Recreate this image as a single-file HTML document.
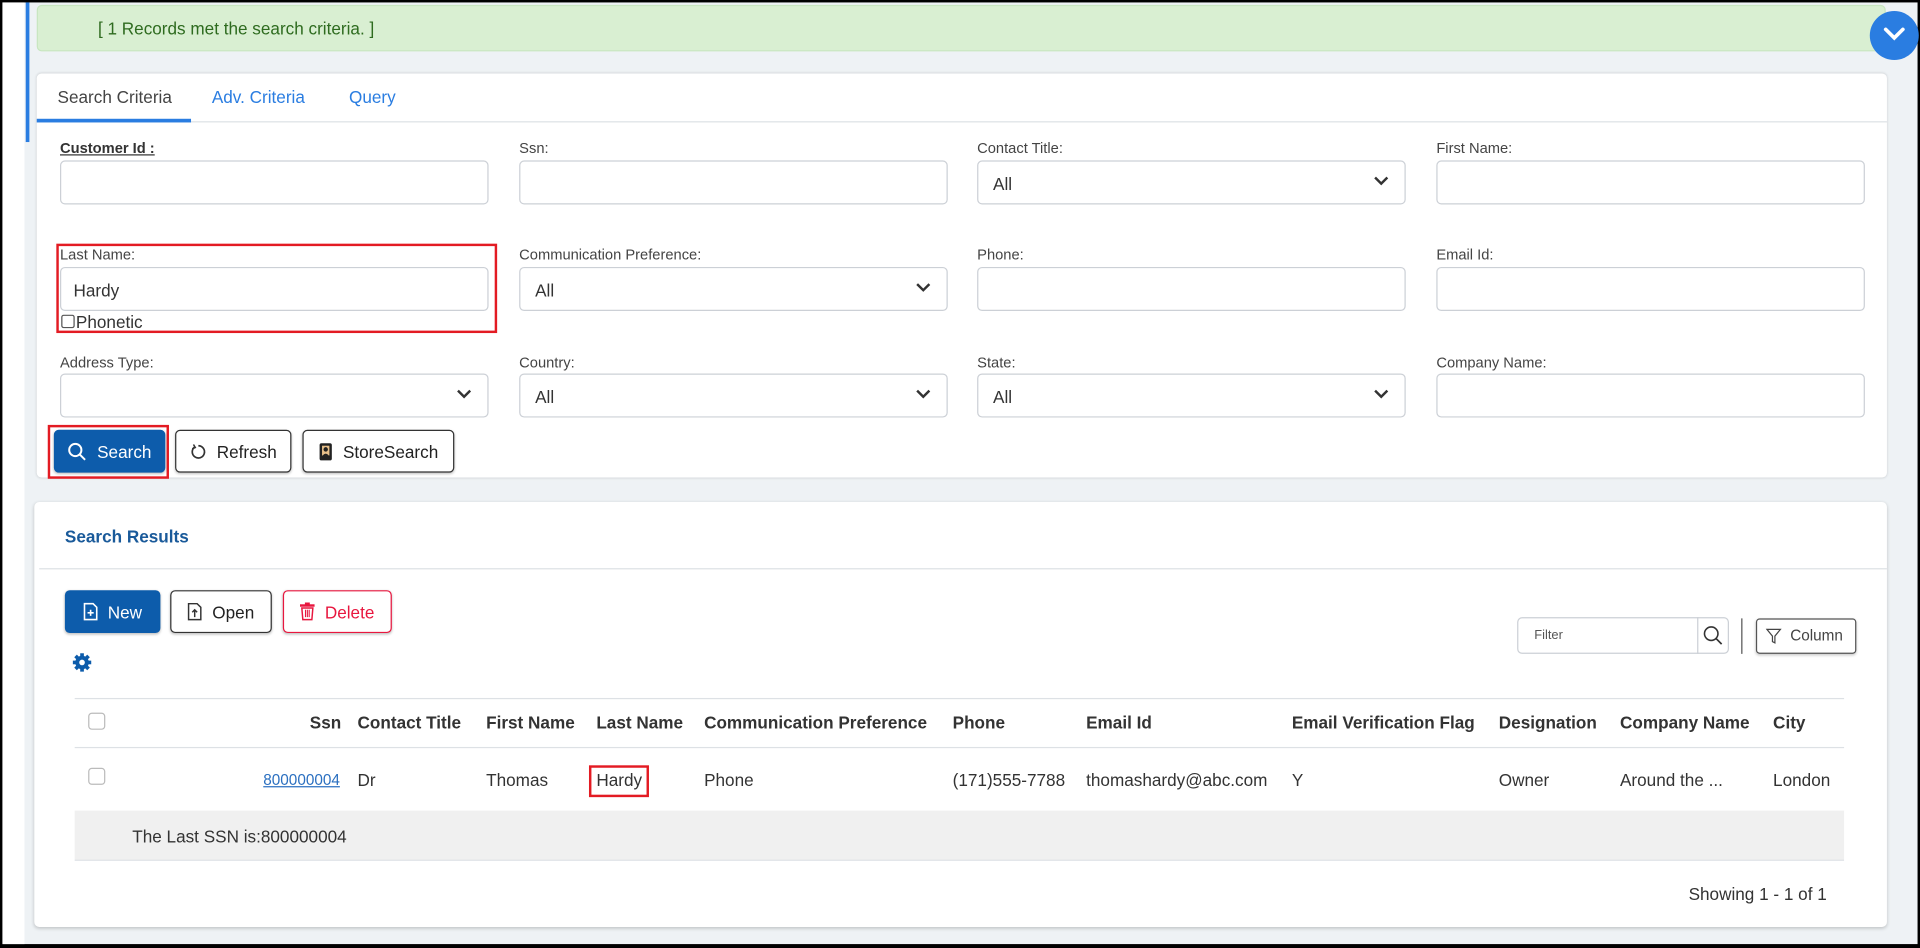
<!DOCTYPE html>
<html><head><meta charset="utf-8">
<style>
*{box-sizing:border-box;margin:0;padding:0}
html,body{width:1920px;height:948px;overflow:hidden;background:#000}
#w{position:absolute;left:0;top:0;width:1568px;height:774px;transform:scale(1.22449);transform-origin:0 0;background:#000;font-family:"Liberation Sans",sans-serif;color:#333}
.a{position:absolute;white-space:nowrap}
.lbl{font-size:12px;color:#444}
.inp{position:absolute;height:36px;width:350px;border:1px solid #ccd0d6;border-radius:4px;background:#fff;font-size:14px;color:#333;padding:10px 12px}
.chev{position:absolute;right:12px;top:11px}
.btn{position:absolute;height:35px;border:1px solid #333;border-radius:4px;background:#fff;font-size:14px;color:#222;display:flex;align-items:center;justify-content:center;gap:8px;box-shadow:0 1px 2px rgba(0,0,0,.25)}
.th{position:absolute;top:582px;font-size:14px;font-weight:bold;color:#333}
.td{position:absolute;top:629px;font-size:14px;color:#333}
</style></head><body><div id="w">
<div class="a" style="left:2px;top:2px;width:1564px;height:769px;background:#eef2f5"></div>
<div class="a" style="left:2px;top:2px;width:18px;height:769px;background:#fff"></div>
<div class="a" style="left:21px;top:2px;width:3px;height:114px;background:#2a7de1"></div>
<!-- banner -->
<div class="a" style="left:30px;top:4px;width:1510px;height:38px;background:#d9efd2;border:1px solid #c8e6c0;border-radius:4px"></div>
<div class="a" style="left:80px;top:15px;font-size:14px;color:#2e6b1f">[ 1 Records met the search criteria. ]</div>
<div class="a" style="left:1527px;top:9px;width:40px;height:40px;border-radius:50%;background:#2a7de1"></div>
<svg class="a" style="left:1538px;top:21px" width="18" height="14" viewBox="0 0 18 14"><path d="M2 3 L9 10 L16 3" stroke="#fff" stroke-width="3" fill="none" stroke-linecap="round"/></svg>
<!-- card 1 -->
<div class="a" style="left:30px;top:60px;width:1511px;height:330px;background:#fff;border-radius:4px;box-shadow:0 0 2px rgba(0,0,0,.15)"></div>
<div class="a" style="left:30px;top:99px;width:1511px;height:1px;background:#dde1e5"></div>
<div class="a" style="left:30px;top:97px;width:126px;height:3px;background:#2a7de1"></div>
<div class="a" style="left:47px;top:71px;font-size:14px;color:#444">Search Criteria</div>
<div class="a" style="left:173px;top:71px;font-size:14px;color:#2a7de1">Adv. Criteria</div>
<div class="a" style="left:285px;top:71px;font-size:14px;color:#2a7de1">Query</div>

<div class="a lbl" style="left:49px;top:114px;font-weight:bold;text-decoration:underline;color:#333">Customer Id :</div>
<div class="inp" style="left:49px;top:131px"></div>
<div class="a lbl" style="left:424px;top:114px">Ssn:</div>
<div class="inp" style="left:424px;top:131px"></div>
<div class="a lbl" style="left:798px;top:114px">Contact Title:</div>
<div class="inp" style="left:798px;top:131px">All<svg class="chev" width="14" height="10"><path d="M2 2 L7 7 L12 2" stroke="#333" stroke-width="2" fill="none"/></svg></div>
<div class="a lbl" style="left:1173px;top:114px">First Name:</div>
<div class="inp" style="left:1173px;top:131px"></div>

<div class="a lbl" style="left:49px;top:201px">Last Name:</div>
<div class="inp" style="left:49px;top:218px;padding-left:10px">Hardy</div>
<div class="a" style="left:50px;top:257px;width:11px;height:11px;border:1px solid #555;border-radius:2px;background:#fff"></div>
<div class="a" style="left:62px;top:255px;font-size:14px;color:#333">Phonetic</div>
<div class="a" style="left:46px;top:199px;width:360px;height:73px;border:2px solid #e31b23"></div>
<div class="a lbl" style="left:424px;top:201px">Communication Preference:</div>
<div class="inp" style="left:424px;top:218px">All<svg class="chev" width="14" height="10"><path d="M2 2 L7 7 L12 2" stroke="#333" stroke-width="2" fill="none"/></svg></div>
<div class="a lbl" style="left:798px;top:201px">Phone:</div>
<div class="inp" style="left:798px;top:218px"></div>
<div class="a lbl" style="left:1173px;top:201px">Email Id:</div>
<div class="inp" style="left:1173px;top:218px"></div>

<div class="a lbl" style="left:49px;top:289px">Address Type:</div>
<div class="inp" style="left:49px;top:305px"><svg class="chev" width="14" height="10"><path d="M2 2 L7 7 L12 2" stroke="#333" stroke-width="2" fill="none"/></svg></div>
<div class="a lbl" style="left:424px;top:289px">Country:</div>
<div class="inp" style="left:424px;top:305px">All<svg class="chev" width="14" height="10"><path d="M2 2 L7 7 L12 2" stroke="#333" stroke-width="2" fill="none"/></svg></div>
<div class="a lbl" style="left:798px;top:289px">State:</div>
<div class="inp" style="left:798px;top:305px">All<svg class="chev" width="14" height="10"><path d="M2 2 L7 7 L12 2" stroke="#333" stroke-width="2" fill="none"/></svg></div>
<div class="a lbl" style="left:1173px;top:289px">Company Name:</div>
<div class="inp" style="left:1173px;top:305px"></div>

<div class="a" style="left:39px;top:347px;width:99px;height:44px;border:2px solid #e31b23"></div>
<div class="btn" style="left:44px;top:351px;width:91px;background:#0d5cab;border-color:#0d5cab;color:#fff"><svg width="16" height="16"><circle cx="6.5" cy="6.5" r="5" stroke="#fff" stroke-width="1.6" fill="none"/><path d="M10 10 L14.5 14.5" stroke="#fff" stroke-width="1.6"/></svg>Search</div>
<div class="btn" style="left:143px;top:351px;width:95px"><svg width="14" height="14"><path d="M4 3 A5 5 0 1 0 7 2" stroke="#333" stroke-width="1.4" fill="none"/><path d="M3 1 L4.5 3.5 L2 4.5" stroke="#333" stroke-width="1.2" fill="none"/></svg>Refresh</div>
<div class="btn" style="left:247px;top:351px;width:124px"><svg width="12" height="16"><rect x="1" y="1" width="10" height="14" rx="1.5" fill="#222"/><rect x="3" y="3" width="6" height="8" fill="#e8c08a"/><circle cx="6" cy="6" r="1.8" fill="#222"/><path d="M3.5 11 Q6 8 8.5 11Z" fill="#222"/></svg>StoreSearch</div>

<!-- card 2 -->
<div class="a" style="left:28px;top:410px;width:1513px;height:347px;background:#fff;border-radius:4px;box-shadow:0 1px 3px rgba(0,0,0,.2)"></div>
<div class="a" style="left:53px;top:430px;font-size:14px;font-weight:bold;color:#1a5a9a">Search Results</div>
<div class="a" style="left:32px;top:464px;width:1509px;height:1px;background:#dde1e5"></div>
<div class="btn" style="left:53px;top:482px;width:78px;background:#0d5cab;border-color:#0d5cab;color:#fff"><svg width="12" height="15"><path d="M1 1 H8 L11 4 V14 H1Z" stroke="#fff" stroke-width="1.3" fill="none"/><path d="M6 6 V11 M3.5 8.5 H8.5" stroke="#fff" stroke-width="1.3"/></svg>New</div>
<div class="btn" style="left:139px;top:482px;width:83px"><svg width="12" height="15"><path d="M1 1 H8 L11 4 V14 H1Z" stroke="#333" stroke-width="1.2" fill="none"/><path d="M6 12 V6 M4 8 L6 6 L8 8" stroke="#333" stroke-width="1.2" fill="none"/></svg>Open</div>
<div class="btn" style="left:231px;top:482px;width:89px;border-color:#e8173f;color:#e8173f"><svg width="12" height="15"><rect x="0" y="1.5" width="12" height="2" fill="#e8173f"/><rect x="4" y="0" width="4" height="2" fill="#e8173f"/><path d="M1.5 4.5 H10.5 L9.7 14 H2.3Z" stroke="#e8173f" stroke-width="1.2" fill="none"/><path d="M4.5 6 V12 M6 6 V12 M7.5 6 V12" stroke="#e8173f" stroke-width=".9"/></svg>Delete</div>
<svg class="a" style="left:59px;top:533px" width="16" height="16" viewBox="0 0 16 16"><g fill="#0d5cab"><circle cx="8" cy="8" r="5.5"/><rect x="6.5" y="0.5" width="3" height="15"/><rect x="0.5" y="6.5" width="15" height="3"/><rect x="6.5" y="0.5" width="3" height="15" transform="rotate(45 8 8)"/><rect x="6.5" y="0.5" width="3" height="15" transform="rotate(-45 8 8)"/></g><circle cx="8" cy="8" r="2.3" fill="#fff"/></svg>

<div class="a" style="left:1239px;top:504px;width:173px;height:30px;border:1px solid #ccd0d6;border-radius:4px;background:#fff"></div>
<div class="a" style="left:1386px;top:504px;width:1px;height:30px;background:#ccd0d6"></div>
<div class="a" style="left:1253px;top:513px;font-size:10.5px;color:#555">Filter</div>
<svg class="a" style="left:1390px;top:510px" width="18" height="18"><circle cx="7.5" cy="7.5" r="5.5" stroke="#333" stroke-width="1.3" fill="none"/><path d="M11.5 11.5 L16 16" stroke="#333" stroke-width="1.4"/></svg>
<div class="a" style="left:1422px;top:505px;width:1px;height:29px;background:#555"></div>
<div class="a" style="left:1434px;top:505px;width:82px;height:29px;border:1px solid #555;border-radius:3px;background:#fff;box-shadow:0 1px 2px rgba(0,0,0,.2)"></div>
<svg class="a" style="left:1442px;top:513px" width="13" height="13"><path d="M1 1 H12 L7.5 6.5 V12 L5.5 11 V6.5Z" stroke="#444" stroke-width="1" fill="none"/></svg>
<div class="a" style="left:1462px;top:512px;font-size:12.5px;color:#444">Column</div>

<!-- table -->
<div class="a" style="left:61px;top:570px;width:1445px;height:1px;background:#dde1e5"></div>
<div class="a" style="left:61px;top:610px;width:1445px;height:1px;background:#dde1e5"></div>
<div class="a" style="left:61px;top:662px;width:1445px;height:40px;background:#f0f0f0"></div>
<div class="a" style="left:61px;top:702px;width:1445px;height:1px;background:#dde1e5"></div>
<div class="a" style="left:72px;top:582px;width:14px;height:14px;border:1px solid #bbb;border-radius:3px;background:#fff"></div>
<div class="a" style="left:72px;top:627px;width:14px;height:14px;border:1px solid #bbb;border-radius:3px;background:#fff"></div>
<div class="th" style="left:253px">Ssn</div>
<div class="th" style="left:292px">Contact Title</div>
<div class="th" style="left:397px">First Name</div>
<div class="th" style="left:487px">Last Name</div>
<div class="th" style="left:575px">Communication Preference</div>
<div class="th" style="left:778px">Phone</div>
<div class="th" style="left:887px">Email Id</div>
<div class="th" style="left:1055px">Email Verification Flag</div>
<div class="th" style="left:1224px">Designation</div>
<div class="th" style="left:1323px">Company Name</div>
<div class="th" style="left:1448px">City</div>
<div class="td" style="left:215px;top:630px;font-size:12.5px;color:#2a6fc0;text-decoration:underline">800000004</div>
<div class="td" style="left:292px">Dr</div>
<div class="td" style="left:397px">Thomas</div>
<div class="a" style="left:481px;top:625px;width:49px;height:26px;border:2px solid #e31b23"></div>
<div class="td" style="left:487px">Hardy</div>
<div class="td" style="left:575px">Phone</div>
<div class="td" style="left:778px">(171)555-7788</div>
<div class="td" style="left:887px">thomashardy@abc.com</div>
<div class="td" style="left:1055px">Y</div>
<div class="td" style="left:1224px">Owner</div>
<div class="td" style="left:1323px">Around the ...</div>
<div class="td" style="left:1448px">London</div>
<div class="a" style="left:108px;top:675px;font-size:14px;color:#333">The Last SSN is:800000004</div>
<div class="a" style="left:1379px;top:722px;font-size:14px;color:#333">Showing 1 - 1 of 1</div>
</div></body></html>
